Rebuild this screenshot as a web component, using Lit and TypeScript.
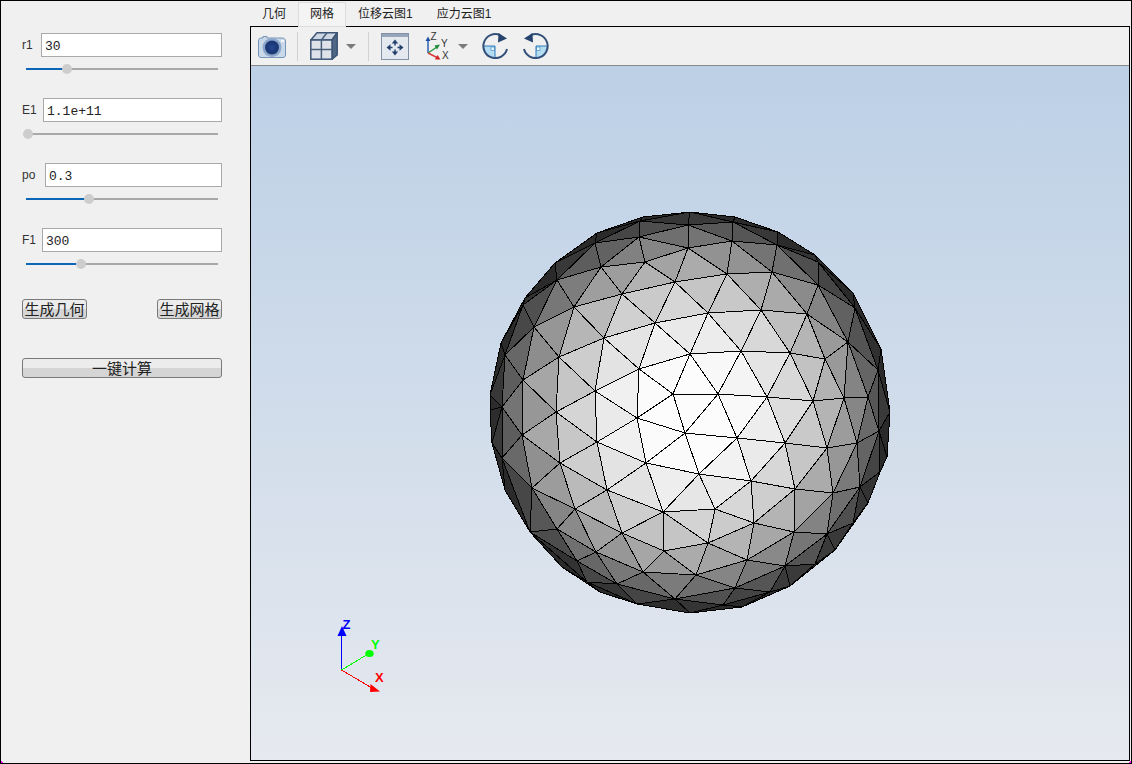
import { LitElement, html, svg, css } from 'lit';
import { customElement } from 'lit/decorators.js';

// projected mesh vertices, screen coordinates of the reference
const RIM = [
  [490, 410], [490, 395], [501, 343], [525, 298], [555, 263], [597, 233], [643, 217], [690, 212],
  [735, 217], [778, 232], [815, 255], [853, 293], [881, 349], [890, 412], [887, 457], [880, 472],
  [868, 503], [835, 550], [790, 586], [742, 607], [690, 613], [637, 604], [600, 592], [562, 567],
  [530, 532], [505, 490], [492, 443],
];
const INNER = [
  [640, 221], [688, 225], [733, 222], [777, 245], [818, 262], [855, 308], [878, 370], [879, 431],
  [860, 487], [853, 523], [815, 564], [770, 592], [723, 605], [675, 599], [617, 584], [587, 582],
  [577, 561], [502, 458], [502, 407], [505, 355], [523, 305], [557, 280], [595, 243],
  [639, 237], [688, 248], [732, 241], [772, 272], [818, 285], [848, 342], [868, 397], [857, 443],
  [833, 493], [827, 534], [785, 566], [735, 588], [696, 575], [643, 572], [596, 552], [557, 529],
  [532, 488], [522, 435], [523, 380], [534, 327], [574, 307], [601, 267], [645, 262],
  [622, 294], [675, 282], [727, 274], [807, 314], [825, 359], [844, 398], [827, 448], [794, 532],
  [747, 560], [708, 543], [664, 551], [622, 533], [575, 509], [560, 463], [556, 412], [559, 357],
  [604, 338], [655, 323], [708, 313], [761, 310], [790, 353], [813, 401], [785, 443], [795, 489],
  [754, 523], [715, 509], [663, 512], [607, 490], [597, 442], [595, 391], [639, 369], [690, 354],
  [741, 351], [767, 397], [718, 394], [673, 394], [637, 418], [685, 433], [737, 438], [751, 481],
  [699, 474], [646, 463],
];
// edges the triangulation gets wrong, read off the reference
const FORCED = [
  [[878, 370], [879, 431]],
  [[530, 532], [587, 582]],
  [[587, 582], [637, 604]],
  [[502, 458], [530, 532]],
];
const CX = 690;
const CY = 412;
const R = 202;

type Pt = [number, number];
type Tri = [number, number, number];

// Delaunay in an unrolled view of the sphere, so rim triangles keep their shape
function triangulate(pts: Pt[]): Tri[] {
  const all: Pt[] = [...pts, [-5000, -5000], [5000, -5000], [0, 5000]];
  const n = pts.length;
  let tris: Tri[] = [[n, n + 1, n + 2]];
  const inCircle = (t: Tri, p: Pt) => {
    const [ax, ay] = all[t[0]];
    const [bx, by] = all[t[1]];
    const [cx, cy] = all[t[2]];
    const d = 2 * (ax * (by - cy) + bx * (cy - ay) + cx * (ay - by));
    const a2 = ax * ax + ay * ay;
    const b2 = bx * bx + by * by;
    const c2 = cx * cx + cy * cy;
    const ux = (a2 * (by - cy) + b2 * (cy - ay) + c2 * (ay - by)) / d;
    const uy = (a2 * (cx - bx) + b2 * (ax - cx) + c2 * (bx - ax)) / d;
    return Math.hypot(p[0] - ux, p[1] - uy) < Math.hypot(ax - ux, ay - uy);
  };
  for (let i = 0; i < n; i++) {
    const bad = tris.filter((t) => inCircle(t, pts[i]));
    const edges = new Map<string, [number, number]>();
    for (const t of bad) {
      for (const [a, b] of [[t[0], t[1]], [t[1], t[2]], [t[2], t[0]]]) {
        const k = a < b ? `${a}_${b}` : `${b}_${a}`;
        if (edges.has(k)) edges.delete(k);
        else edges.set(k, [a, b]);
      }
    }
    tris = tris.filter((t) => !bad.includes(t));
    for (const [a, b] of edges.values()) tris.push([a, b, i]);
  }
  return tris.filter((t) => t.every((v) => v < n));
}

// swap the diagonal of the quad that has p and q as opposite corners
function flipTo(tris: Tri[], p: number, q: number) {
  if (tris.some((t) => t.includes(p) && t.includes(q))) return;
  for (const a of tris.filter((t) => t.includes(p))) {
    const [r, s] = a.filter((v) => v !== p);
    const b = tris.find((t) => t.includes(q) && t.includes(r) && t.includes(s));
    if (b) {
      tris.splice(tris.indexOf(a), 1);
      tris.splice(tris.indexOf(b), 1);
      tris.push([p, q, r], [p, q, s]);
      return;
    }
  }
}

function buildMesh() {
  const pts = [...RIM, ...INNER] as Pt[];
  const flat = pts.map(([x, y]): Pt => {
    const dx = x - CX;
    const dy = y - CY;
    const r = Math.hypot(dx, dy) || 1;
    const s = (Math.asin(Math.min(r / R, 1)) * R) / r;
    return [dx * s, dy * s];
  });
  const depth = pts.map(([x, y]) => {
    const q = 1 - ((x - CX) ** 2 + (y - CY) ** 2) / (R * R);
    return Math.sqrt(Math.max(q, 0)) * R;
  });
  const tris = triangulate(flat).filter((t) => !t.every((v) => v < RIM.length));
  const at = (c: number[]) => pts.findIndex((p) => p[0] === c[0] && p[1] === c[1]);
  for (const [a, b] of FORCED) flipTo(tris, at(a), at(b));
  return tris.map((t) => {
    const sx = t.reduce((a, v) => a + pts[v][0] - CX, 0);
    const sy = t.reduce((a, v) => a + pts[v][1] - CY, 0);
    const sz = t.reduce((a, v) => a + depth[v], 0);
    const lum = sz / Math.hypot(sx, sy, sz);
    const g = Math.round(Math.max(42, Math.min(252, 258 * Math.pow(lum, 1.12))));
    return { points: t.map((v) => pts[v].join(',')).join(' '), fill: `rgb(${g},${g},${g})` };
  });
}

const MESH = buildMesh();

const FIELDS = [
  { label: 'r1', value: '30', labelWidth: 19, handle: 41 },
  { label: 'E1', value: '1.1e+11', labelWidth: 21, handle: 2 },
  { label: 'po', value: '0.3', labelWidth: 23, handle: 63 },
  { label: 'F1', value: '300', labelWidth: 20, handle: 55 },
];

const TABS = ['几何', '网格', '位移云图1', '应力云图1'];

const rotateIcon = html`<svg viewBox="0 0 26 26" width="26" height="26">
  <path d="M1 13A12 12 0 0 0 13 25V13Z" fill="#b4dcf3" />
  <rect x="9" y="14" width="3.500" height="3.500" fill="#e8f5fc" stroke="#4d93c4" stroke-width=".7" />
  <path d="M1 13H13V25" fill="none" stroke="#2f7dbb" stroke-width="1" />
  <path d="M25 16A12 12 0 1 1 18 2" fill="none" stroke="#33507a" stroke-width="2" />
  <path d="M16.500 0L25 5.500 16 9.500Z" fill="#26436e" />
</svg>`;

const caret = html`<svg class="caret" viewBox="0 0 10 5" width="10" height="5"><path d="M0 0H10L5 5Z" fill="#7b7b7b" /></svg>`;

@customElement('app-root')
export class AppRoot extends LitElement {
  static styles = css`
    :host {
      display: flex;
      position: relative;
      width: 1132px;
      height: 764px;
      box-sizing: border-box;
      border: 1px solid #000;
      background: #f0f0f0;
      font-family: 'Liberation Sans', 'Noto Sans CJK SC', sans-serif;
      color: #222;
      overflow: hidden;
    }
    .side {
      width: 249px;
      flex: none;
      box-sizing: border-box;
      padding: 32px 0 0 21px;
    }
    .field {
      width: 200px;
      height: 65px;
    }
    .row {
      display: flex;
      align-items: center;
      height: 24px;
    }
    .label {
      font-size: 12px;
      flex: none;
      color: #333;
    }
    .row input {
      flex: 1;
      min-width: 0;
      height: 24px;
      box-sizing: border-box;
      border: 1px solid #a9a9a9;
      background: #fff;
      padding: 2px 3px 0;
      margin: 0;
      font: 13px 'Liberation Mono', monospace;
      color: #222;
      outline: none;
    }
    .slider {
      position: relative;
      margin: 6px 0 0 4px;
      width: 192px;
      height: 12px;
    }
    .track {
      position: absolute;
      left: 0;
      right: 0;
      top: 5px;
      height: 2px;
      background: #a8a8a8;
    }
    .fill {
      position: absolute;
      left: 0;
      top: 5px;
      height: 2px;
      background: #0b66b8;
    }
    .handle {
      position: absolute;
      top: 1px;
      width: 10px;
      height: 10px;
      margin-left: -5px;
      border-radius: 50%;
      background: #cdcdcd;
    }
    .actions {
      display: flex;
      justify-content: space-between;
      width: 200px;
      margin-top: 6px;
    }
    button {
      height: 20px;
      padding: 0;
      margin: 0;
      box-sizing: border-box;
      border: 1px solid #7a7a7a;
      border-radius: 3px;
      background: linear-gradient(#ececec 50%, #d5d5d5 50%);
      font: 15px/18px 'Noto Sans CJK SC', sans-serif;
      color: #222;
    }
    .small {
      width: 65px;
    }
    .wide {
      display: block;
      width: 200px;
      margin-top: 39px;
    }
    .main {
      flex: 1;
      min-width: 0;
      display: flex;
      flex-direction: column;
      padding: 0 1px 2px 0;
    }
    .tabs {
      display: flex;
      height: 25px;
      flex: none;
    }
    .tab {
      position: relative;
      z-index: 1;
      box-sizing: border-box;
      height: 25px;
      margin-top: 1px;
      padding: 0 12px;
      font: 12px/24px 'Liberation Sans', 'Noto Sans CJK SC', sans-serif;
      color: #222;
      white-space: nowrap;
    }
    .tab.on {
      background: #f4f4f4;
      box-shadow: inset 0 0 0 1px #dcdcdc;
    }
    .pane {
      flex: 1;
      min-height: 0;
      display: flex;
      flex-direction: column;
      border: 1px solid #000;
    }
    .toolbar {
      flex: none;
      display: flex;
      align-items: center;
      height: 38px;
      padding-left: 7px;
      border-bottom: 1px solid #8a8a8a;
      background: #f0f0f0;
    }
    .toolbar svg {
      display: block;
      flex: none;
    }
    .sep {
      flex: none;
      width: 1px;
      height: 29px;
      background: #d2d2d2;
    }
    .caret {
      margin-left: 8px;
    }
    .flip {
      transform: scaleX(-1);
    }
    .view {
      flex: 1;
      min-height: 0;
      background: linear-gradient(#bcd0e6, #e6e9ef);
    }
    .view svg {
      display: block;
    }
    .corner {
      position: absolute;
      bottom: -1px;
      width: 5px;
      height: 5px;
    }
    .corner.l {
      left: -1px;
      background: linear-gradient(45deg, #f0f 45%, transparent 50%);
    }
    .corner.r {
      right: -1px;
      background: linear-gradient(-45deg, #f0f 45%, transparent 50%);
    }
  `;

  renderField(f: (typeof FIELDS)[number]) {
    return html`<div class="field">
      <div class="row">
        <span class="label" style="width:${f.labelWidth}px">${f.label}</span>
        <input .value=${f.value} />
      </div>
      <div class="slider">
        <div class="track"></div>
        <div class="fill" style="width:${f.handle}px"></div>
        <div class="handle" style="left:${f.handle}px"></div>
      </div>
    </div>`;
  }

  renderToolbar() {
    return html`<div class="toolbar">
      <svg viewBox="0 0 28 23" width="28" height="23">
        <path d="M3 3H5V1.500H9V3H24C26 3 27.500 4 27.500 6V20C27.500 21.500 26.500 22.500 25 22.500H3C1.500 22.500 .5 21.500 .5 20V6C.5 4 1.500 3 3 3Z" fill="#c9d9ea" stroke="#7595b8" />
        <circle cx="14" cy="12.500" r="9.500" fill="#8ba6c8" />
        <circle cx="14" cy="12.500" r="7" fill="#1c3a78" />
        <circle cx="14" cy="12.500" r="3" fill="#24448a" />
        <rect x="23" y="5" width="3" height="2" fill="#f4f7fb" />
      </svg>
      <div class="sep" style="margin-left:11px"></div>
      <svg style="margin-left:12px" viewBox="0 0 28 28" width="28" height="28">
        <path d="M.8 8L7 .8H27.200L22 8Z" fill="#cdd6e1" stroke="#3d5475" stroke-width="1.500" />
        <path d="M22 8L27.200 .8V23L22 27.200Z" fill="#4f6685" stroke="#3d5475" stroke-width="1.500" />
        <rect x=".8" y="8" width="21.200" height="19.200" fill="#dfe3e9" stroke="#3d5475" stroke-width="1.500" />
        <path d="M11.400 8V27M1 17.500H22M11.400 8L17 .8" stroke="#4a5f7e" stroke-width="1.500" fill="none" />
      </svg>
      ${caret}
      <div class="sep" style="margin-left:12px"></div>
      <svg style="margin-left:12px" viewBox="0 0 28 27" width="28" height="27">
        <rect x=".5" y=".5" width="27" height="26" fill="#e4e8ef" stroke="#8391a8" />
        <rect x="1" y="1" width="26" height="3" fill="#97a5ba" />
        <path d="M14 6.500L10.800 10.500H17.200ZM14 22.500L10.800 18.500H17.200ZM5.500 14.500L9.500 11.300V17.700ZM22.500 14.500L18.500 11.300V17.700Z" fill="#24406c" />
        <path d="M14 10V12.500M14 16.500V19M9 14.500H11.500M16.500 14.500H19" stroke="#24406c" stroke-width="1.500" />
      </svg>
      <svg style="margin-left:15px;overflow:visible" viewBox="0 0 26 28" width="26" height="28">
        <path d="M4 21V8" stroke="#2a62b0" stroke-width="1.500" />
        <path d="M4 4.500L1.500 9H6.500Z" fill="#1e4fa5" />
        <path d="M4 21L13 15" stroke="#2f9a45" stroke-width="1.500" />
        <path d="M16 12.500L10.500 13.500 13 17.500Z" fill="#1f8a3a" />
        <path d="M4 21L13 25.500" stroke="#d83a3a" stroke-width="1.500" />
        <path d="M16.500 27.500L11 27.500 13.500 23Z" fill="#d42020" />
        <text x="6.500" y="8" font-size="10" font-family="Liberation Sans" fill="#333">Z</text>
        <text x="17" y="15" font-size="10" font-family="Liberation Sans" fill="#333">Y</text>
        <text x="18" y="27" font-size="10" font-family="Liberation Sans" fill="#333">X</text>
      </svg>
      ${caret}
      <div style="margin-left:14px">${rotateIcon}</div>
      <div class="flip" style="margin-left:15px">${rotateIcon}</div>
    </div>`;
  }

  renderView() {
    return html`<div class="view">
      <svg viewBox="251 66 878 694" width="878" height="694">
        <polygon points=${RIM.map((p) => p.join(',')).join(' ')} fill="#2e2e2e" shape-rendering="crispEdges" />
        ${MESH.map(
          (t) => svg`<polygon points=${t.points} fill=${t.fill} stroke="#000" stroke-width="1" stroke-linejoin="round" shape-rendering="crispEdges" />`
        )}
        <g shape-rendering="crispEdges" stroke-width="1">
          <line x1="341.500" y1="670" x2="341.500" y2="634" stroke="#0000ff" />
          <line x1="341.500" y1="670" x2="368" y2="654" stroke="#00ff00" />
          <line x1="341.500" y1="670" x2="372" y2="688" stroke="#ff0000" />
        </g>
        <path d="M342 626L346.500 636H337.500Z" fill="#0000ff" />
        <ellipse cx="369.500" cy="653.500" rx="4.200" ry="3.500" fill="#00ff00" />
        <path d="M370.500 684L380 691.500 370 692Z" fill="#ff0000" />
        <g font-family="Liberation Sans" font-size="13" font-weight="700">
          <text x="342.500" y="629" fill="#0000ff">Z</text>
          <text x="371" y="648.500" fill="#00ff00">Y</text>
          <text x="375" y="682" fill="#ff0000">X</text>
        </g>
      </svg>
    </div>`;
  }

  render() {
    return html`
      <div class="side">
        ${FIELDS.map((f) => this.renderField(f))}
        <div class="actions">
          <button class="small">生成几何</button>
          <button class="small">生成网格</button>
        </div>
        <button class="wide">一键计算</button>
      </div>
      <div class="main">
        <div class="tabs">
          ${TABS.map((t, i) => html`<div class="tab ${i === 1 ? 'on' : ''}">${t}</div>`)}
        </div>
        <div class="pane">${this.renderToolbar()}${this.renderView()}</div>
      </div>
      <div class="corner l"></div>
      <div class="corner r"></div>
    `;
  }
}
